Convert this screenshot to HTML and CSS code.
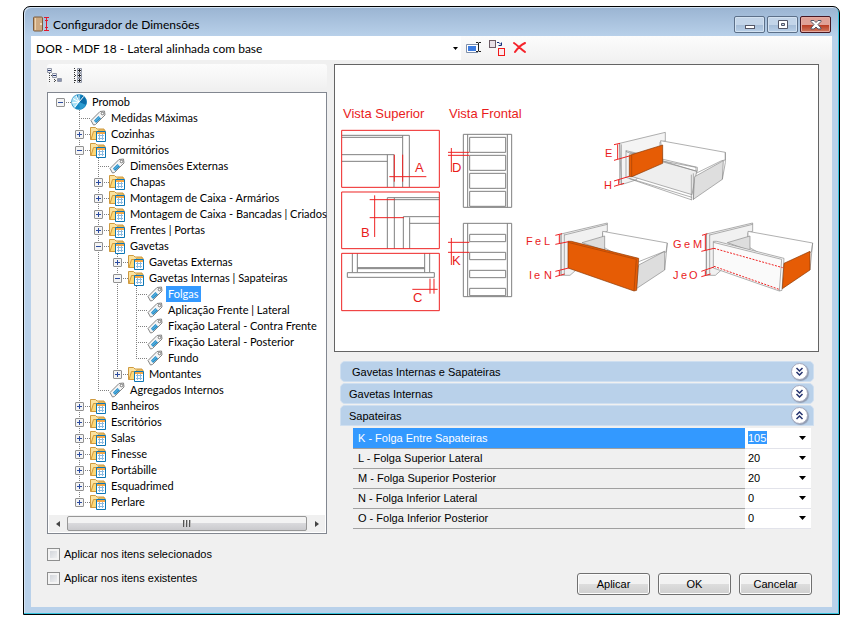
FILE: index.html
```html
<!DOCTYPE html>
<html lang="pt-BR">
<head>
    <meta charset="UTF-8">
    <meta name="viewport" content="width=device-width, initial-scale=1.0">
    <title>Configurador de Dimensões</title>
    <link rel="stylesheet" href="styles.css">
</head>
<body>
    <!-- Ícones usados na árvore -->
    <svg class="sprites" width="0" height="0" aria-hidden="true">
        <symbol id="folder" viewBox="0 0 16 16">
            <path d="M.5 13.5v-12h5l1.5 1.500h7v10.500z" fill="#fbe3a0" stroke="#cf9a3f"/>
            <path d="M1 13.500 3.500 5.500H8l1-1.500h6l-1.500 9.500z" fill="#fdd978" stroke="#d39a3c"/>
            <path d="M6.500 5.500h9v10h-9z" fill="#fff" stroke="#0d76b5"/>
            <path d="M7 6h8v2H7z" fill="#f5a847"/>
            <path d="M9.500 8v6M12.500 8v6M8 9.500h6M8 12.500h6" stroke="#8cbbe0" fill="none"/>
        </symbol>
        <symbol id="tag" viewBox="0 0 16 16">
            <path d="M1 10.500 10 1.500l4.500-.5.5 4-9.500 9.500-2 .5z" fill="#f5f5f5" stroke="#858585"/>
            <path d="M4 10.500 8.500 6 11 8.500 6 13z" fill="#238ec9"/>
            <path d="M5 11.500 9.500 7" stroke="#7cc4ea"/>
            <circle cx="12.500" cy="3.500" r="1.300" fill="#fff" stroke="#777"/>
        </symbol>
        <symbol id="promob" viewBox="0 0 16 16">
            <circle cx="8" cy="8" r="7.500" fill="#1689c4"/>
            <path d="M8 8 5 1a7.500 7.500 0 0 0-1 13z" fill="#a8e0f5"/>
            <path d="M8 8 11 1a7.500 7.500 0 0 1 4 10z" fill="#0c6da9"/>
            <path d="M8 8 15 11a7.500 7.500 0 0 1-6 4.500z" fill="#2c9bd0"/>
            <path d="M8 8V0M8 8l5-6M8 8l-5 6M8 8l-8 1M8 8 1 4M8 8 5 1" stroke="#fff"/>
            <circle cx="8" cy="8" r="7.500" fill="none" stroke="#1b86bd" stroke-width=".6"/>
        </symbol>
    </svg>

    <div class="window">
        <header class="titlebar">
            <svg class="title-icon" width="17" height="17" viewBox="0 0 17 17">
                <rect x=".5" y="1" width="9" height="14" rx="1" fill="#cda981" stroke="#7d5c3c"/>
                <path d="M2.500 2v12" stroke="#ecd3b0"/>
                <circle cx="8" cy="8" r="1" fill="#f8ecd8"/>
                <path d="M11 1.500h5M11 14.500h5M13.500 2v12M12 4.500h3M12 11.500h3" stroke="#e0182d"/>
            </svg>
            <h1>Configurador de Dimensões</h1>
            <div class="window-buttons">
                <button type="button" aria-label="Minimizar">
                    <svg width="12" height="12" viewBox="0 0 12 12"><rect x="1.500" y="6.500" width="9" height="3" fill="#fff" stroke="#535666"/></svg>
                </button>
                <button type="button" aria-label="Maximizar">
                    <svg width="12" height="12" viewBox="0 0 12 12"><path d="M1.500 1.500h9v8h-9zM4.500 4.500v2h3v-2z" fill="#fff" fill-rule="evenodd" stroke="#535666"/></svg>
                </button>
                <button type="button" class="close" aria-label="Fechar">
                    <svg width="12" height="12" viewBox="0 0 12 12"><path d="M1 1.500h3l2 2 2-2h3v1L8 5.500 11 9v1H8L6 8l-2 2H1V9l3-3.500-3-3z" fill="#fff" stroke="#535666"/></svg>
                </button>
            </div>
        </header>

        <form class="client">
            <div class="profile-bar">
                <select class="profile" aria-label="Perfil de dimensões">
                    <option>DOR - MDF 18 - Lateral alinhada com base</option>
                </select>
                <button type="button" class="tool" aria-label="Renomear">
                    <svg width="16" height="16" viewBox="0 0 16 16">
                        <path d="M13 4.500H1.500v8H13" fill="#fff" stroke="#7f8fa9"/>
                        <rect x="3" y="6" width="8" height="5" fill="#3c7ce0"/>
                        <path d="M11 2.500h2l.5 1 .5-1h2M11 11.500h2l.5-1 .5 1h2M13.500 3v8" fill="none" stroke="#222"/>
                    </svg>
                </button>
                <button type="button" class="tool" aria-label="Duplicar">
                    <svg width="16" height="16" viewBox="0 0 16 16">
                        <rect x=".5" y=".5" width="6" height="7" fill="#e8e0e6" stroke="#6d5d66"/>
                        <rect x="9.500" y="8.500" width="6" height="7" fill="#fbe9ec" stroke="#f01818"/>
                        <path d="M8 2.500h2l2 2M9.500 5.500h3v-3" fill="none" stroke="#152f7c"/>
                    </svg>
                </button>
                <button type="button" class="tool" aria-label="Excluir">
                    <svg width="16" height="16" viewBox="0 0 16 16">
                        <path d="M1 3c3 2 7 6 11 9M12 3C8 5 4 9 2 12" fill="none" stroke="#f5232b" stroke-width="2" stroke-linecap="round"/>
                    </svg>
                </button>
            </div>

            <div class="main">
                <section class="left">
                    <div class="tree-bar">
                        <button type="button" class="tool" aria-label="Recolher tudo">
                            <svg width="16" height="16" viewBox="0 0 16 16">
                                <path d="M2.500 5v10M7.500 9v6M4 7.500h2M8 12.500h3" stroke="#444" stroke-dasharray="1 1"/>
                                <path d="M.5.500h4v4h-4zM5.500 5.500h4v4h-4zM10.500 10.500h4v3h-4z" fill="#eef0f6" stroke="#9298a8"/>
                                <path d="M1 2.500h3M6 7.500h3M11 12h3" stroke="#26366d"/>
                            </svg>
                        </button>
                        <button type="button" class="tool" aria-label="Expandir tudo">
                            <svg width="16" height="16" viewBox="-2 0 16 16">
                                <path d="M1.500 0v15M2 2.500h2M2 7.500h2M2 12.500h2" stroke="#333" stroke-dasharray="1 1"/>
                                <path d="M4.500.500h4v4h-4zM4.500 5.500h4v4h-4zM4.500 10.500h4v4h-4z" fill="#eef0f6" stroke="#9298a8"/>
                                <path d="M5 2.500h3M5 7.500h3M5 12.500h3M6.500 1v3M6.500 6v3M6.500 11v3" stroke="#222"/>
                            </svg>
                        </button>
                    </div>

                    <div class="tree-box">
                        <ul class="tree">
                            <li>
                                <div class="row"><button type="button" class="expander" aria-label="Recolher"></button><svg><use href="#promob"/></svg><span>Promob</span></div>
                                <ul>
                                    <li><div class="row leaf"><svg><use href="#tag"/></svg><span>Medidas Máximas</span></div></li>
                                    <li><div class="row"><button type="button" class="expander plus" aria-label="Expandir"></button><svg><use href="#folder"/></svg><span>Cozinhas</span></div></li>
                                    <li>
                                        <div class="row"><button type="button" class="expander" aria-label="Recolher"></button><svg><use href="#folder"/></svg><span>Dormitórios</span></div>
                                        <ul>
                                            <li><div class="row leaf"><svg><use href="#tag"/></svg><span>Dimensões Externas</span></div></li>
                                            <li><div class="row"><button type="button" class="expander plus" aria-label="Expandir"></button><svg><use href="#folder"/></svg><span>Chapas</span></div></li>
                                            <li><div class="row"><button type="button" class="expander plus" aria-label="Expandir"></button><svg><use href="#folder"/></svg><span>Montagem de Caixa - Armários</span></div></li>
                                            <li><div class="row"><button type="button" class="expander plus" aria-label="Expandir"></button><svg><use href="#folder"/></svg><span>Montagem de Caixa - Bancadas | Criados</span></div></li>
                                            <li><div class="row"><button type="button" class="expander plus" aria-label="Expandir"></button><svg><use href="#folder"/></svg><span>Frentes | Portas</span></div></li>
                                            <li>
                                                <div class="row"><button type="button" class="expander" aria-label="Recolher"></button><svg><use href="#folder"/></svg><span>Gavetas</span></div>
                                                <ul>
                                                    <li><div class="row"><button type="button" class="expander plus" aria-label="Expandir"></button><svg><use href="#folder"/></svg><span>Gavetas Externas</span></div></li>
                                                    <li>
                                                        <div class="row"><button type="button" class="expander" aria-label="Recolher"></button><svg><use href="#folder"/></svg><span>Gavetas Internas | Sapateiras</span></div>
                                                        <ul>
                                                            <li><div class="row leaf"><svg><use href="#tag"/></svg><span class="selected">Folgas</span></div></li>
                                                            <li><div class="row leaf"><svg><use href="#tag"/></svg><span>Aplicação Frente | Lateral</span></div></li>
                                                            <li><div class="row leaf"><svg><use href="#tag"/></svg><span>Fixação Lateral - Contra Frente</span></div></li>
                                                            <li><div class="row leaf"><svg><use href="#tag"/></svg><span>Fixação Lateral - Posterior</span></div></li>
                                                            <li><div class="row leaf"><svg><use href="#tag"/></svg><span>Fundo</span></div></li>
                                                        </ul>
                                                    </li>
                                                    <li><div class="row"><button type="button" class="expander plus" aria-label="Expandir"></button><svg><use href="#folder"/></svg><span>Montantes</span></div></li>
                                                </ul>
                                            </li>
                                            <li><div class="row leaf"><svg><use href="#tag"/></svg><span>Agregados Internos</span></div></li>
                                        </ul>
                                    </li>
                                    <li><div class="row"><button type="button" class="expander plus" aria-label="Expandir"></button><svg><use href="#folder"/></svg><span>Banheiros</span></div></li>
                                    <li><div class="row"><button type="button" class="expander plus" aria-label="Expandir"></button><svg><use href="#folder"/></svg><span>Escritórios</span></div></li>
                                    <li><div class="row"><button type="button" class="expander plus" aria-label="Expandir"></button><svg><use href="#folder"/></svg><span>Salas</span></div></li>
                                    <li><div class="row"><button type="button" class="expander plus" aria-label="Expandir"></button><svg><use href="#folder"/></svg><span>Finesse</span></div></li>
                                    <li><div class="row"><button type="button" class="expander plus" aria-label="Expandir"></button><svg><use href="#folder"/></svg><span>Portábille</span></div></li>
                                    <li><div class="row"><button type="button" class="expander plus" aria-label="Expandir"></button><svg><use href="#folder"/></svg><span>Esquadrimed</span></div></li>
                                    <li><div class="row"><button type="button" class="expander plus" aria-label="Expandir"></button><svg><use href="#folder"/></svg><span>Perlare</span></div></li>
                                </ul>
                            </li>
                        </ul>
                        <div class="scrollbar">
                            <button type="button" aria-label="Rolar para a esquerda"><svg width="5" height="8" viewBox="0 0 5 8"><path d="M4 1v6L0 4z" fill="#444"/></svg></button>
                            <div class="thumb"><i></i><i></i><i></i></div>
                            <button type="button" aria-label="Rolar para a direita"><svg width="5" height="8" viewBox="0 0 5 8"><path d="M1 1v6l4-3z" fill="#444"/></svg></button>
                        </div>
                    </div>
                </section>

                <section class="right">
                    <div class="picture">
                        <svg viewBox="1 1 483 286">
                            <!-- Vista superior -->
                            <g class="caption">
                                <text x="9" y="54">Vista Superior</text>
                                <text x="115" y="54">Vista Frontal</text>
                            </g>
                            <g transform="scale(.33333)">
                                <g class="line">
                                    <path d="M24 214H226V369M24 220H206M206 214V369M24 272H180V369M24 292H160M160 272V369"/>
                                    <path d="M160 554V401H316M181 401V554M181 407H316M208 554V458H316M227 460V554M227 478H316"/>
                                    <path d="M55 568V625M70 568V625M272 568V625M287 568V625M70 611H272M70 614H272M40 626H301V640H40z"/>
                                    <path d="M388 211H533V430H388zM401 211V430M520 211V430"/>
                                    <path d="M407 220H515V265H407zM407 274H515V319H407zM407 328H515V373H407zM407 382H515V427H407z"/>
                                    <path d="M388 478H533V698H388zM401 478V698M520 478V698"/>
                                    <path d="M407 511H515V533H407zM407 565H515V587H407zM407 619H515V641H407zM407 673H515V695H407z"/>
                                </g>
                                <g class="red">
                                    <path d="M23 199H316V370H23zM23 384H316V554H23zM23 568H316V740H23z"/>
                                    <path d="M181 272V353M206 272V353M166 338H277"/>
                                    <path d="M107 407H182M107 461H210M122 394V519"/>
                                    <path d="M288 644V689M300 644V689M235 676H311"/>
                                    <path d="M342 265H406M342 274H406M352 252V324"/>
                                    <path d="M342 535H406M342 565H406M352 522V603"/>
                                </g>
                            </g>
                            <g class="caption">
                                <text x="81" y="108">A</text>
                                <text x="27" y="173">B</text>
                                <text x="79" y="238">C</text>
                                <text x="118" y="108">D</text>
                                <text x="118" y="201">K</text>
                            </g>

                            <!-- Gaveta E / H -->
                            <g transform="translate(186 56) scale(.33333)">
                                <g class="panel">
                                    <path d="M299 70 436 37V63L420 66V80L348 180 304 194z" fill="#f4f4f4"/>
                                    <path d="M304 73V194M299 70V190"/>
                                    <path d="M422 62 616 97V120L605 122 528 160V142L428 123z" fill="#fff"/>
                                    <path d="M428 123 530 154 516 224 334 169z" fill="#eee"/>
                                    <path d="M318 92 532 142V154L320 96zM318 92V172L516 232M328 176 516 240"/>
                                    <path d="M524 170 610 122 607 178 520 238z" fill="#dedede"/>
                                    <path d="M514 164V240M520 160V240M616 97V128L607 178M328 104 332 98 428 123"/>
                                </g>
                                <path class="orange" d="M328 106 428 75V130L336 170H328z"/>
                                <path class="shade" d="M335 105V169"/>
                                <path class="red" d="M282 74 300 70M282 121 328 108M293 73V117M282 183 328 169M282 199 312 190M296 180V194"/>
                            </g>

                            <!-- Gaveta F / L e I / N -->
                            <g transform="translate(186 146) scale(.33333)">
                                <g class="panel">
                                    <path d="M123 72 262 39V64L248 68V110L150 196H123z" fill="#f1f1f1"/>
                                    <path d="M133 73V195M123 72V192M133 75 262 43"/>
                                    <path d="M248 64 442 99 438 126 354 170 248 110z" fill="#fff"/>
                                    <path d="M186 98 254 78V122z" fill="#ddd"/>
                                    <path d="M356 165 434 124V180L349 236z" fill="#ddd"/>
                                    <path d="M356 155 434 124M442 99 434 180"/>
                                </g>
                                <path class="orange" d="M144 94 154 94 356 145 350 241 342 243 144 174z"/>
                                <path class="shade" d="M144 97 349 148 342 243"/>
                                <path class="red" d="M106 76 126 71M106 103 146 95M118 74V100M106 184 146 174M106 200 134 192M118 182V197"/>
                            </g>

                            <!-- Gaveta G / M e J / O -->
                            <g transform="translate(186 146) scale(.33333)">
                                <g class="panel">
                                    <path d="M559 72 698 39V64L684 68V110L586 196H559z" fill="#f1f1f1"/>
                                    <path d="M569 73V195M559 72V192M569 75 698 43"/>
                                    <path d="M684 64 878 99 874 126 790 170 684 110z" fill="#fff"/>
                                    <path d="M622 98 690 78V122z" fill="#ddd"/>
                                    <path d="M580 94 590 94 792 145 786 241 778 243 580 174z" fill="#fafafa"/>
                                    <path d="M580 97 785 148 778 243M878 99 870 180"/>
                                </g>
                                <path class="orange" d="M792 160 870 124V180L787 236z"/>
                                <path class="red" d="M546 76 562 71M544 124 582 115M556 74V120M544 184 582 171M544 200 572 192M556 182V197"/>
                                <path class="red dashed" d="M582 115 788 173M582 169 780 239"/>
                            </g>
                            <g class="caption small">
                                <text x="271" y="93">E</text>
                                <text x="270" y="125">H</text>
                                <text x="192 201 210" y="181">FeL</text>
                                <text x="195 200 210" y="215">IeN</text>
                                <text x="339 350 359" y="184">GeM</text>
                                <text x="339 347 355" y="215">JeO</text>
                            </g>
                        </svg>
                    </div>

                    <div class="groups">
                        <div class="group-head inset">
                            <h2>Gavetas Internas e Sapateiras</h2>
                            <button type="button" aria-label="Expandir grupo"><svg width="9" height="9" viewBox="0 0 9 9"><path d="M1.500 1l3 3 3-3M1.500 5l3 3 3-3"/></svg></button>
                        </div>
                        <div class="group-head">
                            <h2>Gavetas Internas</h2>
                            <button type="button" aria-label="Expandir grupo"><svg width="9" height="9" viewBox="0 0 9 9"><path d="M1.500 1l3 3 3-3M1.500 5l3 3 3-3"/></svg></button>
                        </div>
                        <div class="group-head open">
                            <h2>Sapateiras</h2>
                            <button type="button" aria-label="Recolher grupo"><svg width="9" height="9" viewBox="0 0 9 9"><path d="M1.500 4l3-3 3 3M1.500 8l3-3 3 3"/></svg></button>
                        </div>
                        <table class="values">
                            <tr class="current">
                                <th scope="row"><label for="valueK">K - Folga Entre Sapateiras</label></th>
                                <td><select id="valueK"><option>105</option></select></td>
                            </tr>
                            <tr>
                                <th scope="row"><label for="valueL">L - Folga Superior Lateral</label></th>
                                <td><select id="valueL"><option>20</option></select></td>
                            </tr>
                            <tr>
                                <th scope="row"><label for="valueM">M - Folga Superior Posterior</label></th>
                                <td><select id="valueM"><option>20</option></select></td>
                            </tr>
                            <tr>
                                <th scope="row"><label for="valueN">N - Folga Inferior Lateral</label></th>
                                <td><select id="valueN"><option>0</option></select></td>
                            </tr>
                            <tr>
                                <th scope="row"><label for="valueO">O - Folga Inferior Posterior</label></th>
                                <td><select id="valueO"><option>0</option></select></td>
                            </tr>
                        </table>
                    </div>
                </section>
            </div>

            <footer class="footer">
                <div class="checks">
                    <label><input type="checkbox"> Aplicar nos itens selecionados</label>
                    <label><input type="checkbox"> Aplicar nos itens existentes</label>
                </div>
                <div class="actions">
                    <button type="button">Aplicar</button>
                    <button type="button">OK</button>
                    <button type="button">Cancelar</button>
                </div>
            </footer>
        </form>
    </div>
</body>
</html>
```
FILE: styles.css
```css
* {
    box-sizing: border-box;
}
body {
    margin: 0;
    padding: 6px 8px 8px 23px;
    background: #fff;
    color: #000;
    font-family: "Liberation Sans", Arial, sans-serif;
    font-size: 11px;
}
button,
select,
input {
    margin: 0;
    font: inherit;
    color: inherit;
}
button {
    padding: 0;
}
.sprites {
    position: absolute;
}

/* Janela */
.window {
    border: 1px solid #000;
    border-radius: 7px 7px 0 0;
    padding: 0 7px 7px;
    background: linear-gradient(#9ab4d2, #b9d1ea 30px);
    box-shadow: inset -1px -1px #35c3dd, inset 1px 1px #d5e4f3;
}
.titlebar {
    display: flex;
    align-items: center;
    height: 29px;
    padding: 6px 1px 0 2px;
}
.titlebar h1 {
    flex: 1;
    margin: 0 0 0 3px;
    font-family: Lato, "Open Sans", sans-serif;
    font-size: 12px;
    font-weight: normal;
}
.window-buttons {
    display: flex;
    gap: 2px;
}
.window-buttons button {
    display: flex;
    align-items: center;
    justify-content: center;
    width: 31px;
    height: 17px;
    border: 1px solid #5c7089;
    border-radius: 2px;
    background: linear-gradient(#c3d5e9 50%, #a3bbd6 50%, #b8cfe8);
    box-shadow: inset 0 0 0 1px #d3e2f1;
}
.window-buttons .close {
    border-color: #471722;
    background: linear-gradient(#e0a197 50%, #b8361d 50%, #d07a60);
    box-shadow: inset 0 0 0 1px #e5aaa0;
}
.client {
    background: #f0f0f0;
}

/* Barra de perfil */
.profile-bar {
    display: flex;
    align-items: center;
    height: 24px;
    background: linear-gradient(#fcfcfc, #f2f2f2);
}
select {
    appearance: none;
    border: 0;
    border-radius: 0;
    outline: 0;
    background: #fff url("data:image/svg+xml,%3Csvg xmlns='http://www.w3.org/2000/svg' width='7' height='4'%3E%3Cpath d='M0 0h7L3.5 4z'/%3E%3C/svg%3E") no-repeat right 5px center;
}
.profile {
    width: 430px;
    height: 24px;
    margin-right: 4px;
    padding: 0 16px 0 5px;
    background-size: 5px 3px;
    background-position: right 3px center;
    font-family: Lato, "Open Sans", sans-serif;
    font-size: 12px;
}
.tool {
    display: flex;
    border: 0;
    margin-right: 8px;
    background: none;
}

.main {
    display: grid;
    grid-template-columns: 280px 1fr;
    gap: 7px;
    padding: 4px 13px 0 16px;
}

/* Árvore */
.left {
    display: flex;
    flex-direction: column;
    gap: 4px;
}
.tree-bar {
    display: flex;
    align-items: center;
    height: 24px;
    border-radius: 3px;
    background: linear-gradient(#fcfcfc, #f1f1f1);
}
.tree-box {
    display: flex;
    flex-direction: column;
    flex: 1;
    border: 1px solid #828790;
    background: #fff;
}
.tree {
    flex: 1;
    padding: 1px 0 5px 8px;
    font-family: Lato, "Liberation Sans", sans-serif;
}
.tree,
.tree ul {
    margin: 0;
    list-style: none;
}
.tree ul {
    padding: 0 0 0 19px;
}
.tree ul > li {
    background: repeating-linear-gradient(#808080 0 1px, transparent 1px 2px) no-repeat 4px 0 / 1px 100%;
}
.tree ul > li:last-child {
    background-size: 1px 8px;
}
.row {
    display: flex;
    align-items: center;
    height: 16px;
    white-space: nowrap;
    background: repeating-linear-gradient(to right, #808080 0 1px, transparent 1px 2px) no-repeat 4px 8px / 12px 1px;
}
.row svg {
    flex: none;
    width: 16px;
    height: 16px;
    margin: 0 3px 0 6px;
}
.leaf {
    padding-left: 9px;
}
.row span {
    padding: 0 2px;
    line-height: 16px;
}
.row .selected {
    background: #3399ff;
    color: #fff;
}
.expander {
    flex: none;
    width: 9px;
    height: 9px;
    border: 1px solid #919191;
    border-radius: 1px;
    background: linear-gradient(#2b4ba0, #2b4ba0) no-repeat center / 5px 1px, #f4f4f4;
}
.expander.plus {
    background: linear-gradient(#2b4ba0, #2b4ba0) no-repeat center / 5px 1px, linear-gradient(#2b4ba0, #2b4ba0) no-repeat center / 1px 5px, #f4f4f4;
}
.scrollbar {
    display: flex;
    height: 17px;
    margin: 0 1px 1px;
    background: #f0f0f0;
}
.scrollbar button {
    width: 18px;
    border: 0;
    background: none;
}
.thumb {
    display: flex;
    flex: 1;
    align-items: center;
    justify-content: center;
    gap: 1px;
    margin: 1px 0;
    border: 1px solid #979797;
    border-radius: 2px;
    background: linear-gradient(#f3f3f3 45%, #d9d9dc 50%, #cacacd);
}
.thumb i {
    width: 2px;
    height: 7px;
    background: linear-gradient(to right, #555 50%, #bbb 50%);
}

/* Figura */
.picture {
    border: 1px solid #646464;
    background: #fff;
}
.picture svg {
    display: block;
    width: 100%;
}
.caption {
    fill: #e91c1c;
    font-size: 13px;
}
.small {
    font-size: 11px;
}
.line {
    fill: none;
    stroke: #808080;
    stroke-width: 3;
}
.red {
    fill: none;
    stroke: #ee2222;
    stroke-width: 3;
}
.dashed {
    stroke-dasharray: 6 4;
}
.panel {
    fill: none;
    stroke: #888;
    stroke-width: 2;
}
.orange {
    fill: #e65c05;
    stroke: #8a3a08;
    stroke-width: 2;
}
.shade {
    fill: none;
    stroke: #a34308;
    stroke-width: 2;
}

/* Grupos de valores */
.groups {
    padding: 9px 5px 0 6px;
}
.group-head {
    display: flex;
    align-items: center;
    justify-content: space-between;
    height: 21px;
    margin-bottom: 1px;
    padding: 0 5px 0 8px;
    border: 1px solid #cfdff0;
    border-radius: 5px;
    background: #b9d1ea;
}
.group-head.inset {
    padding-left: 11px;
}
.group-head.open {
    border-radius: 5px 5px 0 0;
}
.group-head h2 {
    margin: 0;
    font-size: 11px;
    font-weight: normal;
}
.group-head button {
    display: flex;
    align-items: center;
    justify-content: center;
    width: 17px;
    height: 17px;
    border: 1px solid #a5a9bd;
    border-radius: 50%;
    background: #fff;
    box-shadow: 1px 1px 1px #8f9bb0;
}
.group-head path {
    fill: none;
    stroke: #25336e;
    stroke-width: 1.5;
}
.values {
    width: calc(100% - 16px);
    margin: 2px 3px 0 13px;
    border-collapse: collapse;
}
.values tr {
    height: 20px;
}
.values th,
.values td {
    padding: 0;
    border-bottom: 1px solid #a0a0a0;
    text-align: left;
    font-weight: normal;
}
.values th {
    padding-left: 5px;
}
.values td {
    width: 66px;
    border-bottom-color: #e2e3ea;
    background: #fff;
}
.values select {
    display: block;
    width: 100%;
    height: 19px;
    padding: 0 14px 0 3px;
}
.current th {
    background: #3399ff;
    color: #fff;
}
.current select {
    color: #fff;
    background-color: transparent;
}
.current td {
    background: linear-gradient(#3399ff, #3399ff) no-repeat 3px 3px / 19px 13px, #fff;
}

/* Rodapé */
.footer {
    display: flex;
    align-items: flex-end;
    justify-content: space-between;
    padding: 8px 20px 12px 16px;
}
.checks {
    margin-bottom: 5px;
}
.checks label {
    display: flex;
    align-items: center;
    gap: 4px;
    height: 24px;
}
.checks input {
    appearance: none;
    width: 13px;
    height: 13px;
    border: 1px solid #8e8f8f;
    background: linear-gradient(135deg, #cbcfd5, #f6f6f6);
    box-shadow: inset 0 0 0 2px #f4f4f4;
}
.actions {
    display: flex;
    gap: 8px;
}
.actions button {
    width: 73px;
    height: 22px;
    border: 1px solid #707070;
    border-radius: 3px;
    background: linear-gradient(#f2f2f2 50%, #dddddd 50%, #cfcfcf);
    box-shadow: inset 0 0 0 1px #fcfcfc;
}
```
